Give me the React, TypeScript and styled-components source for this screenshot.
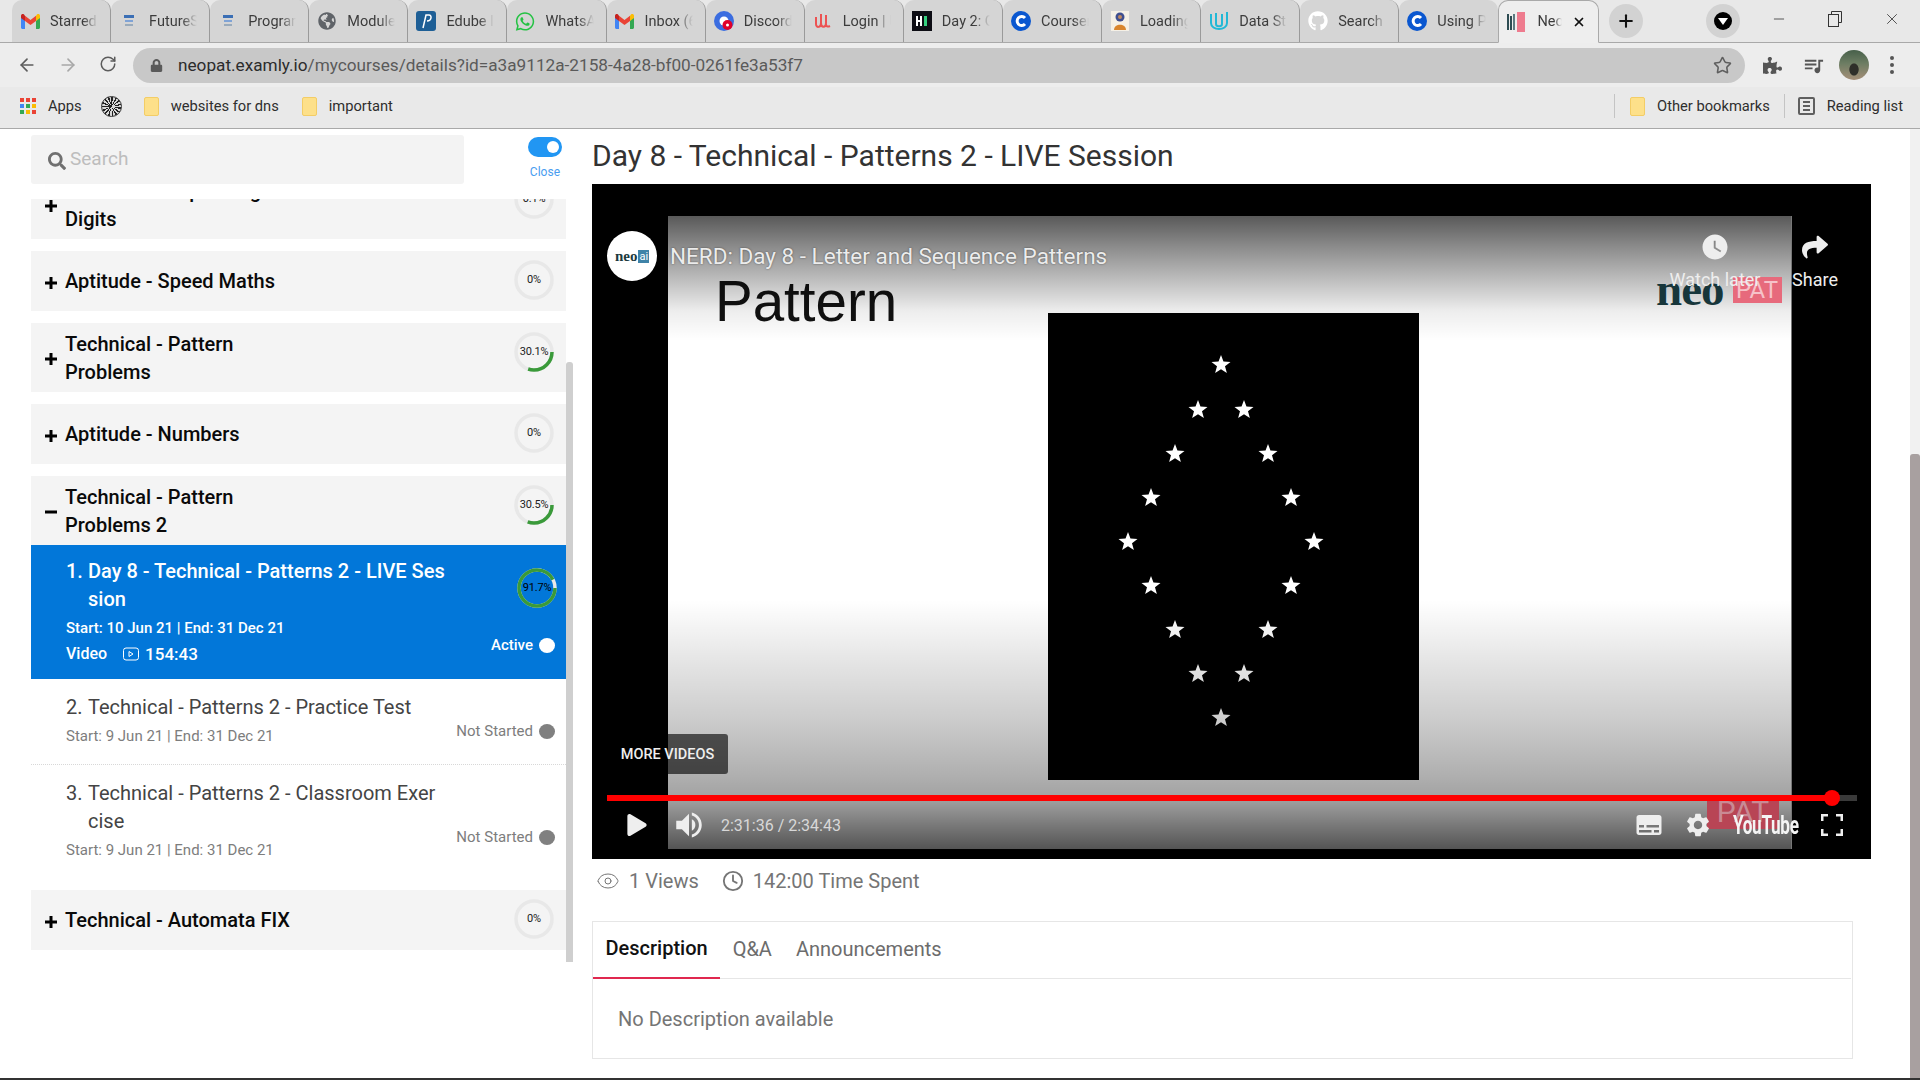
import React from 'react';
import styled, { createGlobalStyle } from 'styled-components';
import { ArrowLeft, ArrowRight, RotateCw, Star, Eye, Clock, X, Plus, Minus } from 'lucide-react';
import { FaPuzzlePiece, FaSearch, FaLock, FaWhatsapp, FaGithub, FaShare, FaPlay, FaGlobeAmericas } from 'react-icons/fa';
import { MdQueueMusic, MdSubtitles, MdSettings, MdVolumeUp, MdWatchLater } from 'react-icons/md';

const GlobalStyle = createGlobalStyle`
  html, body { margin: 0; padding: 0; background: #fff; }
  body { font-family: Roboto, "Liberation Sans", sans-serif; overflow: hidden; }
  * { box-sizing: border-box; }
`;

const Shell = styled.div`
  width: 1920px;
  height: 1080px;
  display: flex;
  flex-direction: column;
  overflow: hidden;
  border-bottom: 2px solid #333;
`;

/* browser chrome */
const Chrome = styled.header`
  height: 129px;
  flex: none;
  background: #ebebeb;
  border-bottom: 1px solid #a9a9a9;
`;
const TabStrip = styled.div`
  height: 43px;
  display: flex;
  align-items: flex-end;
  padding-left: 12px;
  background: #e8e8e8;
  border-bottom: 1px solid #a9a9a9;
`;
const Tab = styled.div<{ $active?: boolean; $last?: boolean }>`
  width: ${(p) => (p.$active ? '101px' : '99.1px')};
  height: ${(p) => (p.$active ? '43px' : '42px')};
  margin-bottom: ${(p) => (p.$active ? '-1px' : '0')};
  flex: none;
  display: flex;
  align-items: center;
  padding: ${(p) => (p.$active ? '0 0 0 8px' : '0 12px 0 8px')};
  gap: 10px;
  background: ${(p) => (p.$active ? '#eeeeee' : '#d5d5d5')};
  border-radius: 10px 10px 0 0;
  border: ${(p) => (p.$active ? '1px solid #a9a9a9' : 'none')};
  border-bottom: ${(p) => (p.$active ? '1px solid #eeeeee' : 'none')};
  border-right: ${(p) => (p.$active ? '1px solid #a9a9a9' : p.$last ? 'none' : '1px solid #9a9a9a')};
  background-clip: padding-box;
  position: relative;
`;
const TabIcon = styled.span`
  width: 20px;
  height: 20px;
  flex: none;
  display: flex;
  align-items: center;
  justify-content: center;
`;
const TabLabel = styled.span`
  font-size: 14.5px;
  color: #3c3c3c;
  white-space: nowrap;
  overflow: hidden;
  flex: 1;
  -webkit-mask-image: linear-gradient(90deg, #000 68%, transparent 100%);
  mask-image: linear-gradient(90deg, #000 68%, transparent 100%);
`;
const TabClose = styled(X)`
  width: 14px;
  height: 14px;
  flex: none;
  margin-right: 12px;
  color: #111;
`;
const NewTab = styled.div`
  width: 34px;
  height: 34px;
  margin: 0 0 4px 10px;
  flex: none;
  border-radius: 50%;
  background: #d2d2d2;
  display: flex;
  align-items: center;
  justify-content: center;
  color: #111;
`;
const ProfileBubble = styled.div`
  width: 34px;
  height: 34px;
  margin: 0 0 4px 63px;
  flex: none;
  border-radius: 50%;
  background: #d2d2d2;
  display: flex;
  align-items: center;
  justify-content: center;
  span {
    width: 18px;
    height: 18px;
    border-radius: 50%;
    background: #000;
    display: flex;
    align-items: center;
    justify-content: center;
  }
  i {
    width: 0;
    height: 0;
    border-left: 5px solid transparent;
    border-right: 5px solid transparent;
    border-top: 7px solid #fff;
  }
`;
const WindowButtons = styled.div`
  display: flex;
  align-items: center;
  height: 42px;
  padding: 0 0 4px 31px;
  gap: 41px;
  color: #333;
`;
const Toolbar = styled.div`
  height: 44px;
  display: flex;
  align-items: center;
  padding: 0 0 0 17px;
  background: #ededed;
`;
const NavButton = styled.span<{ $dim?: boolean }>`
  width: 20px;
  height: 20px;
  margin-right: 21px;
  display: flex;
  color: ${(p) => (p.$dim ? '#a8a8a8' : '#5c5c5c')};
`;
const AddressBar = styled.div`
  width: 1612px;
  height: 35px;
  margin-left: -7px;
  padding: 0 13px 0 17px;
  border-radius: 18px;
  background: #c8c8c8;
  display: flex;
  align-items: center;
  color: #555;
  font-size: 17.2px;
  svg { flex: none; }
`;
const UrlText = styled.span`
  margin-left: 15px;
  flex: 1;
  color: #5a5a5a;
  b { font-weight: 400; color: #2c2c2c; }
`;
const ToolIcons = styled.div`
  display: flex;
  align-items: center;
  margin-left: 18px;
  gap: 20px;
  color: #555;
`;
const ChromeAvatar = styled.span`
  width: 30px;
  height: 30px;
  margin: 0 1px 0 -6px;
  border-radius: 50%;
  background: radial-gradient(ellipse at 50% 65%, #2f2f2a 0 20%, transparent 24%),
    linear-gradient(180deg, #47604a 0%, #6d7d63 45%, #a58f78 100%);
`;
const Dots = styled.span`
  display: flex;
  flex-direction: column;
  gap: 3px;
  i {
    width: 4px;
    height: 4px;
    border-radius: 50%;
    background: #555;
  }
`;
const BookmarkBar = styled.div`
  height: 41px;
  display: flex;
  align-items: center;
  padding: 0 17px 3px 20px;
  font-size: 14.700px;
  color: #2e2e2e;
  background: #e9e9e9;
`;
const Mark = styled.span<{ $left?: number }>`
  display: flex;
  align-items: center;
  margin-left: ${(p) => p.$left ?? 0}px;
  white-space: nowrap;
  gap: 12px;
`;
const Spacer = styled.span`
  flex: 1;
`;
const BarDivider = styled.span<{ $left?: number }>`
  width: 1px;
  height: 24px;
  background: #c4c4c4;
  margin-left: ${(p) => p.$left ?? 0}px;
`;
const Folder = styled.span`
  width: 15px;
  height: 19px;
  border-radius: 2px;
  background: #fde08a;
  border: 1px solid #f3cd66;
`;
const AppsGrid = styled.span`
  width: 16px;
  height: 16px;
  display: grid;
  grid-template-columns: repeat(3, 4px);
  grid-auto-rows: 4px;
  gap: 2px;
`;
const AppsDot = styled.i<{ $color: string }>`
  background: ${(p) => p.$color};
`;
const MeshGlobe = styled.span`
  width: 21px;
  height: 21px;
  border-radius: 50%;
  background: repeating-conic-gradient(#222 0 10deg, #d8d8d8 10deg 24deg);
  border: 1px solid #333;
`;
const ListGlyph = styled.span`
  width: 17px;
  height: 18px;
  border: 2px solid #5f5f5f;
  border-radius: 2px;
  background: repeating-linear-gradient(180deg, #ebebeb 0 2px, #5f5f5f 2px 4px);
  background-clip: content-box;
  padding: 2px 3px;
`;

/* page */
const Page = styled.main`
  flex: 1;
  min-height: 0;
  display: flex;
`;
const Sidebar = styled.aside`
  width: 573px;
  flex: none;
  padding: 6px 0 0 31px;
  display: flex;
  flex-direction: column;
`;
const SearchRow = styled.div`
  height: 64px;
  flex: none;
  display: flex;
  width: 535px;
`;
const SearchBox = styled.div`
  width: 433px;
  height: 49px;
  background: #f3f3f3;
  border-radius: 3px;
  display: flex;
  align-items: center;
  gap: 4px;
  padding: 0 0 2px 17px;
  font-size: 19px;
  color: #bdbdbd;
  svg { color: #707070; margin-top: 4px; }
`;
const ToggleColumn = styled.div`
  margin-left: auto;
  width: 42px;
  padding-top: 2px;
  display: flex;
  flex-direction: column;
  align-items: flex-end;
  font-size: 12px;
  color: #4a9df0;
`;
const ToggleTrack = styled.span`
  width: 34px;
  height: 20px;
  margin: 0 4px 8px 0;
  border-radius: 10px;
  background: #2196f3;
  display: flex;
  align-items: center;
  justify-content: flex-end;
  padding-right: 3px;
  i {
    width: 12px;
    height: 12px;
    border-radius: 50%;
    background: #fff;
  }
`;
const CloseLabel = styled.span`
  margin-right: 6px;
`;
const ListArea = styled.div`
  flex: 1;
  min-height: 0;
  display: flex;
`;
const ListClip = styled.div`
  width: 535px;
  overflow: hidden;
  flex: none;
`;
const ListInner = styled.div`
  margin-top: -29px;
  display: flex;
  flex-direction: column;
`;
const ScrollThumb = styled.div`
  width: 7px;
  height: 600px;
  margin-top: 163px;
  background: #cfcfcf;
  border-radius: 3px 3px 0 0;
  flex: none;
`;
const Section = styled.section`
  margin-bottom: 12px;
`;
const SectionHead = styled.div<{ $lines: number }>`
  min-height: ${(p) => (p.$lines === 1 ? 60 : 69)}px;
  background: #f4f4f4;
  display: flex;
  align-items: center;
  padding: 0 12px 0 14px;
`;
const Expander = styled.svg`
  width: 12px;
  height: 12px;
  flex: none;
  margin: 3px 8px 0 0;
`;
const SectionTitle = styled.div`
  flex: 1;
  font-size: 20px;
  font-weight: 500;
  line-height: 28px;
  color: #0a0a0a;
`;
const RingBox = styled.div<{ $active?: boolean }>`
  position: relative;
  width: 40px;
  height: 40px;
  flex: none;
  align-self: ${(p) => (p.$active ? 'flex-end' : 'flex-start')};
  margin-top: ${(p) => (p.$active ? 11 : 9)}px;
  margin-right: ${(p) => (p.$active ? -2 : 0)}px;
`;
const RingLabel = styled.span<{ $active?: boolean }>`
  position: absolute;
  inset: 0 0 2px 0;
  display: flex;
  align-items: center;
  justify-content: center;
  font-size: 11px;
  color: ${(p) => (p.$active ? '#000' : '#222')};
  white-space: nowrap;
  letter-spacing: -0.2px;
`;
const Lesson = styled.div<{ $active?: boolean; $ruled?: boolean }>`
  display: flex;
  padding: ${(p) => (p.$active ? '12px 11px 14px 35px' : '14px 11px 13px 35px')};
  background: ${(p) => (p.$active ? '#0277d9' : '#fff')};
  border-bottom: ${(p) => (p.$ruled ? '1px dotted #d8d8d8' : 'none')};
  color: ${(p) => (p.$active ? '#fff' : '#7d7d7d')};
`;
const LessonMain = styled.div`
  flex: 1;
`;
const LessonTitle = styled.div<{ $active?: boolean }>`
  display: flex;
  font-size: 20px;
  line-height: 28px;
  font-weight: ${(p) => (p.$active ? 500 : 400)};
  color: ${(p) => (p.$active ? '#fff' : '#444')};
`;
const LessonNumber = styled.span`
  width: 22px;
  flex: none;
`;
const LessonDates = styled.div<{ $active?: boolean }>`
  font-size: 15px;
  line-height: 30px;
  font-weight: ${(p) => (p.$active ? 500 : 400)};
`;
const LessonMeta = styled.div`
  display: flex;
  align-items: center;
  font-size: 16px;
  line-height: 22px;
  font-weight: 500;
  svg { margin: 0 6px 0 16px; }
`;
const Duration = styled.span`
  font-size: 17px;
`;
const LessonSide = styled.div`
  display: flex;
  flex-direction: column;
  align-items: flex-end;
`;
const Status = styled.div<{ $top: number }>`
  margin-top: ${(p) => p.$top}px;
  height: 20px;
  display: flex;
  align-items: center;
  gap: 6px;
  font-size: 15px;
`;
const StatusDot = styled.i<{ $active?: boolean }>`
  width: 16px;
  height: 15px;
  border-radius: 50%;
  background: ${(p) => (p.$active ? '#fff' : '#808080')};
`;
const ActiveLabel = styled.span`
  font-weight: 500;
`;

/* right column */
const Content = styled.div`
  width: 1279px;
  margin-left: 19px;
  flex: none;
`;
const Heading = styled.h1`
  margin: 0;
  height: 55px;
  padding-bottom: 2px;
  display: flex;
  align-items: center;
  font-size: 30px;
  font-weight: 400;
  color: #333;
`;
const VideoFrame = styled.div`
  position: relative;
  height: 675px;
  background: #000;
  overflow: hidden;
`;
const Slide = styled.div`
  position: absolute;
  left: 76px;
  top: 32px;
  width: 1124px;
  height: 633px;
  background: #fff;
  border-right: 1px solid #777;
`;
const SlideTitle = styled.div`
  position: absolute;
  left: 47px;
  top: 58px;
  font: 400 56.500px/1 "Liberation Sans", sans-serif;
  color: #111;
`;
const PatternPanel = styled.svg`
  position: absolute;
  left: 380px;
  top: 97px;
  width: 371px;
  height: 467px;
  background: #000;
`;
const Watermark = styled.div`
  position: absolute;
  left: 988px;
  top: 50px;
  display: flex;
  gap: 9px;
  align-items: center;
`;
const NeoWord = styled.span`
  font: 700 47px/1 "Liberation Serif", serif;
  color: #17363b;
  letter-spacing: -1px;
`;
const PatBadge = styled.span`
  width: 49px;
  height: 26px;
  background: #e76a7c;
  color: #f6c2c9;
  font: 400 24px/26px Roboto, sans-serif;
  text-align: center;
`;
const FooterBadge = styled.span`
  position: absolute;
  left: 1039px;
  bottom: 20px;
  width: 72px;
  height: 33px;
  background: #b84555;
  color: #c98a94;
  font: 400 30px/32px Roboto, sans-serif;
  text-align: center;
`;
const TopShade = styled.div`
  position: absolute;
  inset: 0 0 auto 0;
  height: 125px;
  background: linear-gradient(180deg, rgba(0,0,0,.65) 0%, rgba(0,0,0,.45) 25%, rgba(0,0,0,.25) 52%, rgba(0,0,0,.07) 76%, rgba(0,0,0,0) 100%);
`;
const BottomShade = styled.div`
  position: absolute;
  inset: auto 0 0 0;
  height: 249px;
  background: linear-gradient(180deg, rgba(0,0,0,0) 0%, rgba(0,0,0,.2) 48%, rgba(0,0,0,.31) 70%, rgba(0,0,0,.37) 80%, rgba(0,0,0,.67) 100%);
`;
const ChannelBadge = styled.div`
  position: absolute;
  left: 15px;
  top: 47px;
  width: 50px;
  height: 50px;
  border-radius: 50%;
  background: #fff;
  display: flex;
  align-items: center;
  justify-content: center;
  gap: 1px;
  font: 700 15px/1 "Liberation Serif", serif;
  color: #1b3a40;
  i {
    font: 400 11px/13px Roboto, sans-serif;
    padding: 0 1px;
    color: #fff;
    background: #3f83a8;
  }
`;
const VideoTitle = styled.div`
  position: absolute;
  left: 78px;
  top: 58px;
  font-size: 22.500px;
  line-height: 28px;
  color: #ececec;
  text-shadow: 0 0 2px rgba(0, 0, 0, 0.5);
`;
const TopAction = styled.div<{ $center: number }>`
  position: absolute;
  left: ${(p) => p.$center - 60}px;
  top: 48px;
  width: 120px;
  display: flex;
  flex-direction: column;
  align-items: center;
  gap: 7px;
  font-size: 18px;
  line-height: 22px;
  color: #eee;
  svg { height: 30px; }
`;
const MoreVideos = styled.div`
  position: absolute;
  left: 15px;
  top: 550px;
  width: 121px;
  height: 40px;
  border-radius: 3px;
  background: rgba(0, 0, 0, 0.62);
  display: flex;
  align-items: center;
  justify-content: center;
  font-size: 14.500px;
  font-weight: 500;
  color: #eee;
`;
const Progress = styled.div`
  position: absolute;
  left: 15px;
  right: 14px;
  bottom: 58px;
  height: 6px;
  background: #3a3a3a;
`;
const ProgressFill = styled.div`
  position: relative;
  height: 100%;
  background: #f00;
  &::after {
    content: '';
    position: absolute;
    right: -8px;
    top: -5px;
    width: 16px;
    height: 16px;
    border-radius: 50%;
    background: #f00;
  }
`;
const Controls = styled.div`
  position: absolute;
  left: 34px;
  right: 28px;
  bottom: 12px;
  height: 44px;
  display: flex;
  align-items: center;
  color: #eee;
`;
const TimeText = styled.span`
  margin-left: 15px;
  font-size: 16px;
  color: #d8d8d8;
  flex: 1;
`;
const ControlSlot = styled.span<{ $left?: number; $right?: number }>`
  display: flex;
  margin-left: ${(p) => p.$left ?? 0}px;
  margin-right: ${(p) => p.$right ?? 0}px;
`;
const YouTubeWord = styled.span`
  width: 65px;
  margin-left: 22px;
  font-size: 26px;
  font-weight: 700;
  letter-spacing: -0.5px;
  color: #f4f4f4;
  white-space: nowrap;
  transform: scaleX(0.66);
  transform-origin: left center;
`;
const FullscreenGlyph = styled.svg`
  margin-left: 23px;
`;
const StatsRow = styled.div`
  height: 62px;
  display: flex;
  align-items: center;
  padding: 0 0 18px 4px;
  font-size: 20px;
  color: #757575;
`;
const Stat = styled.span<{ $left?: number }>`
  display: flex;
  align-items: center;
  gap: 9px;
  margin-left: ${(p) => p.$left ?? 0}px;
`;
const InfoPanel = styled.section`
  width: 1261px;
  height: 138px;
  border: 1px solid #e6e6e6;
`;
const TabRow = styled.nav`
  height: 57px;
  display: flex;
  border-bottom: 1px solid #e6e6e6;
  margin-right: 1px;
`;
const InfoTab = styled.span<{ $active?: boolean }>`
  height: 57px;
  padding: 0 12.500px 3px;
  margin-right: ${(p) => (p.$active ? 0 : -1)}px;
  display: flex;
  align-items: center;
  font-size: 20px;
  font-weight: ${(p) => (p.$active ? 500 : 400)};
  color: ${(p) => (p.$active ? '#111' : '#6c6c6c')};
  border-bottom: ${(p) => (p.$active ? '2px solid #e0284f' : 'none')};
`;
const InfoBody = styled.div`
  padding: 27px 25px;
  font-size: 20px;
  line-height: 26px;
  color: #757575;
`;
const PageScroll = styled.div`
  flex: 1;
  margin-left: 39px;
  background: #f1f1f1;
  display: flex;
  flex-direction: column;
  justify-content: flex-end;
`;
const PageThumb = styled.div`
  height: 624px;
  background: #a8a0a0;
  border-radius: 3px 3px 0 0;
`;

/* small drawings */
const GmailIcon = () => (
  <svg width="19" height="15" viewBox="0 0 19 15">
    <path d="M0 2v11.5C0 14.3.7 15 1.5 15H4V6.5z" fill="#4285f4" />
    <path d="M19 2v11.5c0 .8-.7 1.5-1.5 1.5H15V6.5z" fill="#34a853" />
    <path d="M4 7V1.8L9.5 6 15 1.8V7L9.5 11z" fill="#ea4335" />
    <path d="M0 2c0-2 2-2.500 3-1.500L4 1.500V7L0 4z" fill="#c5221f" />
    <path d="M19 2c0-2-2-2.500-3-1.500L15 1.500V7l4-3z" fill="#fbbc04" />
  </svg>
);
const TinyDoc = () => (
  <svg width="12" height="16" viewBox="0 0 12 16">
    <rect x="1" y="2" width="10" height="3" fill="#3b6fb5" />
    <rect x="2" y="7" width="8" height="2" fill="#7fa3d6" />
    <rect x="2" y="11" width="8" height="2" fill="#9ab" />
  </svg>
);
const EdubeIcon = () => (
  <svg width="20" height="20" viewBox="0 0 20 20">
    <rect width="20" height="20" rx="3" fill="#1e5f96" />
    <path d="M7 17 10 4h3c3 0 3 6-2 6" fill="none" stroke="#fff" strokeWidth="1.500" />
  </svg>
);
const DiscordIcon = () => (
  <svg width="20" height="20" viewBox="0 0 20 20">
    <circle cx="10" cy="10" r="10" fill="#3b6de0" />
    <circle cx="10" cy="10" r="4.500" fill="#fff" />
    <circle cx="13.500" cy="14" r="5" fill="#e0002a" />
    <circle cx="13.500" cy="14" r="1.500" fill="#fff" />
  </svg>
);
const UdemyIcon = () => (
  <svg width="19" height="20" viewBox="0 0 19 20">
    <path d="M3 6v7c0 4 5 4 5-1V3M8 12c0 5 5 5 5 0V4M13 13c0 3 2 3 4 2" fill="none" stroke="#ec5252" strokeWidth="2" />
  </svg>
);
const HackerIcon = () => (
  <svg width="20" height="20" viewBox="0 0 20 20">
    <rect width="20" height="20" fill="#0d0d14" />
    <path d="M5 5v10M9 5v10M5 10h4" stroke="#fff" strokeWidth="2" />
    <rect x="12" y="5" width="3" height="10" fill="#35d07f" />
  </svg>
);
const CourseraIcon = () => (
  <svg width="20" height="20" viewBox="0 0 20 20">
    <circle cx="10" cy="10" r="10" fill="#0a57d0" />
    <path d="M14 7a4.500 4.500 0 1 0 0 6" fill="none" stroke="#fff" strokeWidth="3" />
  </svg>
);
const LoadingIcon = () => (
  <svg width="18" height="20" viewBox="0 0 18 20">
    <rect width="18" height="20" fill="#f5f0e6" />
    <circle cx="9" cy="6" r="4.500" fill="#3f4f8f" />
    <circle cx="9" cy="6" r="2" fill="#c08a60" />
    <path d="M3 19c0-7 12-7 12 0z" fill="#d9862f" />
  </svg>
);
const UdacityIcon = () => (
  <svg width="20" height="22" viewBox="0 0 20 22">
    <path d="M2 4v9c0 8 16 8 16 0V2M7 3v11c0 3 6 3 6 0V4" fill="none" stroke="#22b8d6" strokeWidth="2" />
  </svg>
);
const NeoFavicon = () => (
  <svg width="20" height="20" viewBox="0 0 20 20">
    <rect x="0" y="2" width="2" height="16" fill="#2d4c52" />
    <rect x="3" y="4" width="2" height="14" fill="#2d4c52" />
    <rect x="6" y="2" width="2" height="16" fill="#5d7a80" />
    <rect x="10" y="0" width="8" height="20" fill="#ee7b8e" />
  </svg>
);
const RestoreIcon = () => (
  <svg width="14" height="16" viewBox="0 0 14 16">
    <path d="M3.500 3V.5h10v11H11" fill="none" stroke="#333" />
    <rect x="0.500" y="3.500" width="10" height="12" fill="none" stroke="#333" />
  </svg>
);

const TABS: { label: string; icon: React.ReactNode }[] = [
  { label: 'Starred', icon: <GmailIcon /> },
  { label: 'FutureSkills', icon: <TinyDoc /> },
  { label: 'Programming', icon: <TinyDoc /> },
  { label: 'Modules', icon: <FaGlobeAmericas size={18} color="#5f6368" /> },
  { label: 'Edube Interactive', icon: <EdubeIcon /> },
  { label: 'WhatsApp', icon: <FaWhatsapp size={21} color="#25c244" /> },
  { label: 'Inbox (6)', icon: <GmailIcon /> },
  { label: 'Discord', icon: <DiscordIcon /> },
  { label: 'Login | Udemy', icon: <UdemyIcon /> },
  { label: 'Day 2: Gems', icon: <HackerIcon /> },
  { label: 'Coursera', icon: <CourseraIcon /> },
  { label: 'Loading...', icon: <LoadingIcon /> },
  { label: 'Data Structures', icon: <UdacityIcon /> },
  { label: 'Search', icon: <FaGithub size={20} color="#fff" /> },
  { label: 'Using Python', icon: <CourseraIcon /> },
];

const APP_COLORS = ['#ea4335', '#ea4335', '#ea4335', '#4285f4', '#34a853', '#fbbc04', '#34a853', '#fbbc04', '#ea4335'];

const Ring = ({ value, active }: { value: number; active?: boolean }) => {
  const r = 18;
  const len = 2 * Math.PI * r;
  return (
    <RingBox $active={active}>
      <svg width="40" height="40" viewBox="0 0 40 40">
        <circle cx="20" cy="20" r={r} fill="none" stroke="#e8e8e8" strokeWidth="3.500" />
        <circle
          cx="20"
          cy="20"
          r={r}
          fill="none"
          stroke="#3a9a3a"
          strokeWidth="3.500"
          strokeDasharray={`${(value / 100) * len} ${len}`}
        />
      </svg>
      <RingLabel $active={active}>{value}%</RingLabel>
    </RingBox>
  );
};

const ExpanderIcon = ({ open }: { open?: boolean }) => (
  <Expander viewBox="0 0 12 12">
    <rect x="0" y="4.500" width="12" height="3" fill="#000" />
    {!open && <rect x="4.500" y="0" width="3" height="12" fill="#000" />}
  </Expander>
);

const SectionRow = ({ title, value, open, lines = 1 }: { title: React.ReactNode; value: number; open?: boolean; lines?: number }) => (
  <SectionHead $lines={lines}>
    <ExpanderIcon open={open} />
    <SectionTitle>{title}</SectionTitle>
    <Ring value={value} />
  </SectionHead>
);

const STAR_POINTS: [number, number][] = [
  [173, 52], [150, 97], [196, 97], [127, 141], [220, 141], [103, 185], [243, 185], [80, 229],
  [266, 229], [103, 273], [243, 273], [127, 317], [220, 317], [150, 361], [196, 361], [173, 405],
];

const starPath = (cx: number, cy: number) => {
  const pts: string[] = [];
  for (let i = 0; i < 10; i++) {
    const radius = i % 2 === 0 ? 10 : 4.2;
    const a = (Math.PI / 5) * i - Math.PI / 2;
    pts.push(`${cx + radius * Math.cos(a)},${cy + radius * Math.sin(a)}`);
  }
  return pts.join(' ');
};

const WATCHED = 2 * 3600 + 31 * 60 + 36;
const DURATION = 2 * 3600 + 34 * 60 + 43;

export default function App() {
  return (
    <Shell>
      <GlobalStyle />
      <Chrome>
        <TabStrip>
          {TABS.map((t, i) => (
            <Tab key={t.label} $last={i === TABS.length - 1}>
              <TabIcon>{t.icon}</TabIcon>
              <TabLabel>{t.label}</TabLabel>
            </Tab>
          ))}
          <Tab $active>
            <TabIcon><NeoFavicon /></TabIcon>
            <TabLabel>NeoPAT</TabLabel>
            <TabClose strokeWidth={3} />
          </Tab>
          <NewTab><Plus size={20} strokeWidth={2.5} /></NewTab>
          <ProfileBubble><span><i /></span></ProfileBubble>
          <WindowButtons>
            <Minus size={16} strokeWidth={1.2} />
            <RestoreIcon />
            <X size={18} strokeWidth={1.1} />
          </WindowButtons>
        </TabStrip>
        <Toolbar>
          <NavButton><ArrowLeft size={20} /></NavButton>
          <NavButton $dim><ArrowRight size={20} /></NavButton>
          <NavButton><RotateCw size={18} /></NavButton>
          <AddressBar>
            <FaLock size={13} color="#5a5a5a" />
            <UrlText><b>neopat.examly.io</b>/mycourses/details?id=a3a9112a-2158-4a28-bf00-0261fe3a53f7</UrlText>
            <Star size={19} color="#5f5f5f" />
          </AddressBar>
          <ToolIcons>
            <FaPuzzlePiece size={19} />
            <MdQueueMusic size={23} />
            <ChromeAvatar />
            <Dots><i /><i /><i /></Dots>
          </ToolIcons>
        </Toolbar>
        <BookmarkBar>
          <Mark>
            <AppsGrid>{APP_COLORS.map((c, i) => <AppsDot key={i} $color={c} />)}</AppsGrid>
            Apps
          </Mark>
          <Mark $left={19}><MeshGlobe /></Mark>
          <Mark $left={22}><Folder />websites for dns</Mark>
          <Mark $left={23}><Folder />important</Mark>
          <Spacer />
          <BarDivider />
          <Mark $left={15}><Folder />Other bookmarks</Mark>
          <BarDivider $left={14} />
          <Mark $left={13}><ListGlyph />Reading list</Mark>
        </BookmarkBar>
      </Chrome>

      <Page>
        <Sidebar>
          <SearchRow>
            <SearchBox><FaSearch size={18} />Search</SearchBox>
            <ToggleColumn>
              <ToggleTrack><i /></ToggleTrack>
              <CloseLabel>Close</CloseLabel>
            </ToggleColumn>
          </SearchRow>
          <ListArea>
            <ListClip>
              <ListInner>
                <Section><SectionRow title={<>Technical - Expanding<br />Digits</>} value={0.1} lines={2} /></Section>
                <Section><SectionRow title="Aptitude - Speed Maths" value={0} /></Section>
                <Section><SectionRow title={<>Technical - Pattern<br />Problems</>} value={30.1} lines={2} /></Section>
                <Section><SectionRow title="Aptitude - Numbers" value={0} /></Section>
                <Section>
                  <SectionRow title={<>Technical - Pattern<br />Problems 2</>} value={30.5} lines={2} open />
                  <Lesson $active>
                    <LessonMain>
                      <LessonTitle $active>
                        <LessonNumber>1.</LessonNumber>
                        <span>Day 8 - Technical - Patterns 2 - LIVE Ses<br />sion</span>
                      </LessonTitle>
                      <LessonDates $active>Start: 10 Jun 21 | End: 31 Dec 21</LessonDates>
                      <LessonMeta>
                        Video
                        <svg width="16" height="14" viewBox="0 0 16 14">
                          <rect x="0.500" y="1" width="15" height="12" rx="2.500" fill="none" stroke="#fff" />
                          <path d="M6 4.500v5l4-2.500z" fill="none" stroke="#fff" />
                        </svg>
                        <Duration>154:43</Duration>
                      </LessonMeta>
                    </LessonMain>
                    <LessonSide>
                      <Ring value={91.7} active />
                      <Status $top={27}><ActiveLabel>Active</ActiveLabel><StatusDot $active /></Status>
                    </LessonSide>
                  </Lesson>
                  <Lesson $ruled>
                    <LessonMain>
                      <LessonTitle>
                        <LessonNumber>2.</LessonNumber>
                        <span>Technical - Patterns 2 - Practice Test</span>
                      </LessonTitle>
                      <LessonDates>Start: 9 Jun 21 | End: 31 Dec 21</LessonDates>
                    </LessonMain>
                    <LessonSide>
                      <Status $top={28}>Not Started<StatusDot /></Status>
                    </LessonSide>
                  </Lesson>
                  <Lesson>
                    <LessonMain>
                      <LessonTitle>
                        <LessonNumber>3.</LessonNumber>
                        <span>Technical - Patterns 2 - Classroom Exer<br />cise</span>
                      </LessonTitle>
                      <LessonDates>Start: 9 Jun 21 | End: 31 Dec 21</LessonDates>
                    </LessonMain>
                    <LessonSide>
                      <Status $top={48}>Not Started<StatusDot /></Status>
                    </LessonSide>
                  </Lesson>
                </Section>
                <Section><SectionRow title="Technical - Automata FIX" value={0} /></Section>
              </ListInner>
            </ListClip>
            <ScrollThumb />
          </ListArea>
        </Sidebar>

        <Content>
          <Heading>Day 8 - Technical - Patterns 2 - LIVE Session</Heading>
          <VideoFrame>
            <Slide>
              <SlideTitle>Pattern</SlideTitle>
              <PatternPanel viewBox="0 0 371 467">
                {STAR_POINTS.map(([x, y]) => (
                  <polygon key={`${x}-${y}`} points={starPath(x, y)} fill="#fff" />
                ))}
              </PatternPanel>
              <TopShade />
              <BottomShade />
              <Watermark><NeoWord>neo</NeoWord><PatBadge>PAT</PatBadge></Watermark>
              <FooterBadge>PAT</FooterBadge>
            </Slide>
            <ChannelBadge>neo<i>ai</i></ChannelBadge>
            <VideoTitle>NERD: Day 8 - Letter and Sequence Patterns</VideoTitle>
            <TopAction $center={1123}><MdWatchLater size={30} />Watch later</TopAction>
            <TopAction $center={1223}><FaShare size={26} />Share</TopAction>
            <MoreVideos>MORE VIDEOS</MoreVideos>
            <Progress>
              <ProgressFill style={{ width: `${(WATCHED / DURATION) * 100}%` }} />
            </Progress>
            <Controls>
              <ControlSlot><FaPlay size={22} /></ControlSlot>
              <ControlSlot $left={24}><MdVolumeUp size={34} /></ControlSlot>
              <TimeText>2:31:36 / 2:34:43</TimeText>
              <ControlSlot $right={-1}><MdSubtitles size={30} /></ControlSlot>
              <ControlSlot $left={21} $right={-0.5}><MdSettings size={28} /></ControlSlot>
              <YouTubeWord>YouTube</YouTubeWord>
              <FullscreenGlyph width="22" height="22" viewBox="0 0 22 22">
                <path d="M1 7V1h6M15 1h6v6M21 15v6h-6M7 21H1v-6" fill="none" stroke="#eee" strokeWidth="3" />
              </FullscreenGlyph>
            </Controls>
          </VideoFrame>
          <StatsRow>
            <Stat><Eye size={24} strokeWidth={1} />1 Views</Stat>
            <Stat $left={23}><Clock size={22} strokeWidth={2} />142:00 Time Spent</Stat>
          </StatsRow>
          <InfoPanel>
            <TabRow>
              <InfoTab $active>Description</InfoTab>
              <InfoTab>Q&amp;A</InfoTab>
              <InfoTab>Announcements</InfoTab>
            </TabRow>
            <InfoBody>No Description available</InfoBody>
          </InfoPanel>
        </Content>
        <PageScroll><PageThumb /></PageScroll>
      </Page>
    </Shell>
  );
}
